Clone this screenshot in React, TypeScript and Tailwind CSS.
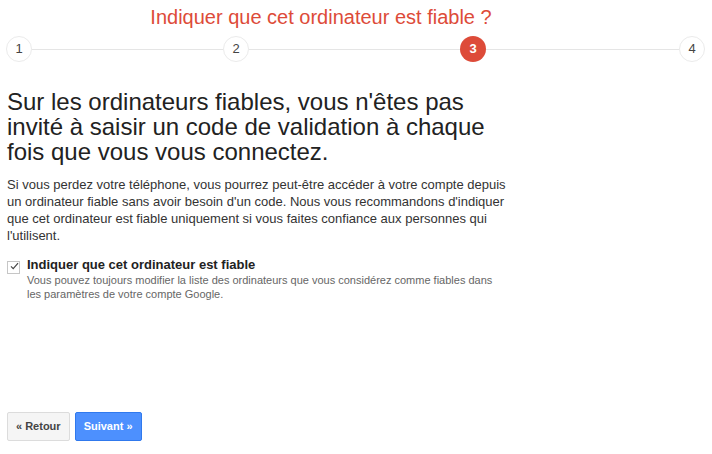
import React from "react";

const font = { fontFamily: '"Liberation Sans", Arial, sans-serif' };

function Step(props: { n: number; active?: boolean }) {
  const { n, active } = props;
  return (
    <div
      className={
        active
          ? "flex h-[26px] w-[26px] shrink-0 items-center justify-center rounded-full bg-[#dd4b39] text-[13px] font-bold text-white"
          : "flex h-[26px] w-[26px] shrink-0 items-center justify-center rounded-full border border-[#ebebeb] bg-white text-[13px] text-[#444]"
      }
    >
      {n}
    </div>
  );
}

export default function App() {
  return (
    <div className="h-[454px] w-[712px] bg-white" style={font}>
      <div className="w-[642px] pt-[5px] text-center text-[20px] leading-[24px] text-[#dd4b39]">
        Indiquer que cet ordinateur est fiable ?
      </div>

      {/* stepper */}
      <div className="mt-[7px] flex items-center pl-[6px]">
        <Step n={1} />
        <div className="h-px w-[191px] bg-[#e5e5e5]" />
        <Step n={2} />
        <div className="h-px w-[211px] bg-[#e5e5e5]" />
        <Step n={3} active />
        <div className="h-px w-[193px] bg-[#e5e5e5]" />
        <Step n={4} />
      </div>

      <div className="px-[7px]">
        <h1 className="mt-[27px] w-[495px] text-[24px] leading-[25px] text-[#222]">
          Sur les ordinateurs fiables, vous n'êtes pas invité à saisir un code de validation à chaque fois que vous vous connectez.
        </h1>

        <p className="mt-[12px] w-[505px] text-[13px] leading-[17px] text-[#333]">
          Si vous perdez votre téléphone, vous pourrez peut-être accéder à votre compte depuis un ordinateur fiable sans avoir besoin d'un code. Nous vous recommandons d'indiquer que cet ordinateur est fiable uniquement si vous faites confiance aux personnes qui l'utilisent.
        </p>

        <div className="mt-[13px] flex gap-[7px]">
          <div className="mt-[4px] flex h-[13px] w-[13px] shrink-0 items-center justify-center border border-[#c6c6c6] bg-white">
            <svg width="14" height="12" viewBox="0 0 14 12" className="-mt-[3px] ml-[2px]">
              <path d="M1.5 6.5 L5 10 L12.5 1.5" fill="none" stroke="#444" strokeWidth="1.8" />
            </svg>
          </div>
          <div>
            <div className="text-[13px] font-bold leading-[16px] text-[#222]">
              Indiquer que cet ordinateur est fiable
            </div>
            <div className="w-[475px] text-[11px] leading-[14px] text-[#666]">
              Vous pouvez toujours modifier la liste des ordinateurs que vous considérez comme fiables dans les paramètres de votre compte Google.
            </div>
          </div>
        </div>
      </div>

      <div className="mt-[111px] flex gap-[5px] pl-[7px]">
        <button className="h-[29px] rounded-[2px] border border-[#dcdcdc] bg-[#f5f5f5] px-[8px] text-[11px] font-bold text-[#444]">
          « Retour
        </button>
        <button className="h-[29px] rounded-[2px] border border-[#3079ed] bg-[#4d90fe] px-[8px] text-[11px] font-bold text-white">
          Suivant »
        </button>
      </div>
    </div>
  );
}
